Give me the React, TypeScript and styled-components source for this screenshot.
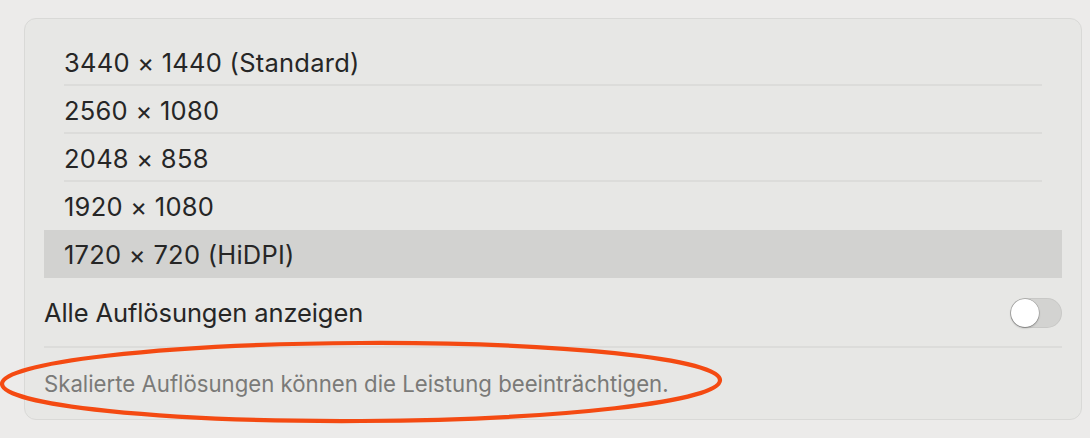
import React from "react";
import styled, { createGlobalStyle } from "styled-components";

const Global = createGlobalStyle`
  html, body { margin: 0; padding: 0; background: #ecebea; }
  body { font-family: Inter, "Noto Sans", "Liberation Sans", sans-serif; -webkit-font-smoothing: antialiased; }
`;

const Page = styled.div`
  position: relative;
  width: 1090px;
  height: 438px;
  box-sizing: border-box;
  padding: 18px 8px 0 24px;
  background: #ecebea;
  overflow: hidden;
`;

const Card = styled.section`
  box-sizing: border-box;
  width: 1058px;
  height: 402px;
  background: #e7e7e5;
  border: 1px solid #d9d9d7;
  border-radius: 12px;
  padding: 19px 19px 0 19px;
  display: flex;
  flex-direction: column;
`;

const List = styled.ul`
  list-style: none;
  margin: 0;
  padding: 0;
  display: flex;
  flex-direction: column;
`;

const Row = styled.li<{ $selected?: boolean; $divider?: boolean }>`
  position: relative;
  height: 48px;
  box-sizing: border-box;
  display: flex;
  align-items: center;
  padding: 1px 0 0 20px;
  font-size: 25.5px;
  color: #262626;
  letter-spacing: 0.25px;
  background: ${(p) => (p.$selected ? "#d2d2d0" : "transparent")};
  &::after {
    content: "";
    display: ${(p) => (p.$divider ? "block" : "none")};
    position: absolute;
    left: 20px;
    right: 20px;
    bottom: 0;
    height: 2px;
    background: #dcdcda;
  }
`;

const ToggleRow = styled.div`
  height: 70px;
  display: flex;
  align-items: center;
  justify-content: space-between;
  font-size: 25.5px;
  color: #262626;
  letter-spacing: -0.1px;
  border-bottom: 2px solid #dcdcda;
  padding-top: 1px;
  box-sizing: border-box;
`;

const Switch = styled.div`
  position: relative;
  width: 52px;
  height: 30px;
  border-radius: 15px;
  background: #d3d3d1;
  box-shadow: inset 0 0 0 1px rgba(0, 0, 0, 0.05);
`;

const Knob = styled.div`
  position: absolute;
  left: 1px;
  top: 1px;
  width: 28px;
  height: 28px;
  border-radius: 50%;
  background: #ffffff;
  box-shadow: 0 0 0 0.5px rgba(0, 0, 0, 0.25), 0 1px 2px rgba(0, 0, 0, 0.3);
`;

const Footnote = styled.p`
  margin: 0;
  padding: 23px 0 0 0;
  line-height: 26px;
  font-size: 22.2px;
  color: #7a7a78;
  letter-spacing: 0px;
`;

const Annotation = styled.svg`
  position: absolute;
  left: 0;
  top: 0;
  pointer-events: none;
`;

const resolutions = [
  "3440 × 1440 (Standard)",
  "2560 × 1080",
  "2048 × 858",
  "1920 × 1080",
  "1720 × 720 (HiDPI)",
];
const selectedIndex = 4;

export default function App() {
  return (
    <Page>
      <Global />
      <Card>
        <List>
          {resolutions.map((r, i) => (
            <Row
              key={r}
              $selected={i === selectedIndex}
              $divider={i !== selectedIndex && i + 1 !== selectedIndex && i < resolutions.length - 1}
            >
              {r}
            </Row>
          ))}
        </List>
        <ToggleRow>
          <span>Alle Auflösungen anzeigen</span>
          <Switch>
            <Knob />
          </Switch>
        </ToggleRow>
        <Footnote>Skalierte Auflösungen können die Leistung beeinträchtigen.</Footnote>
      </Card>
      <Annotation width="1090" height="438" viewBox="0 0 1090 438">
        <ellipse
          cx="361"
          cy="382"
          rx="359"
          ry="39"
          fill="none"
          stroke="#f44a12"
          strokeWidth="4.2"
          transform="rotate(-0.3 361 382)"
        />
      </Annotation>
    </Page>
  );
}
